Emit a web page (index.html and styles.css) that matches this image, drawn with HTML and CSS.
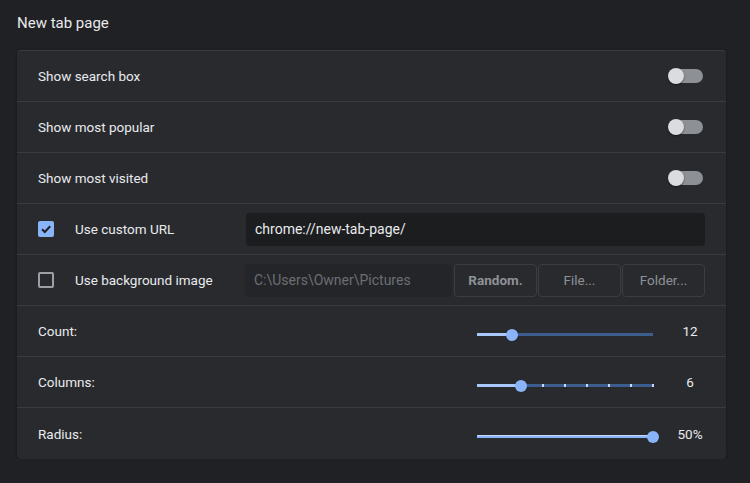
FILE: index.html
```html
<!DOCTYPE html>
<html>
<head>
<meta charset="utf-8">
<link rel="stylesheet" href="styles.css">
</head>
<body>
<div class="page">
  <h1 class="title">New tab page</h1>
  <div class="card">
    <div class="row">
      <span class="label">Show search box</span>
      <span class="toggle"><span class="knob"></span></span>
    </div>
    <div class="row">
      <span class="label">Show most popular</span>
      <span class="toggle"><span class="knob"></span></span>
    </div>
    <div class="row">
      <span class="label">Show most visited</span>
      <span class="toggle"><span class="knob"></span></span>
    </div>
    <div class="row row-input">
      <span class="checkbox checked">
        <svg width="12" height="12" viewBox="0 0 12 12"><path d="M2 6.2 L4.8 9 L10.2 3.2" fill="none" stroke="#202124" stroke-width="2"/></svg>
      </span>
      <span class="label">Use custom URL</span>
      <div class="text-field">chrome://new-tab-page/</div>
    </div>
    <div class="row row-input">
      <span class="checkbox"></span>
      <span class="label">Use background image</span>
      <div class="bg-controls">
        <div class="text-field disabled">C:\Users\Owner\Pictures</div>
        <button class="btn bold">Random.</button>
        <button class="btn">File...</button>
        <button class="btn">Folder...</button>
      </div>
    </div>
    <div class="row">
      <span class="label">Count:</span>
      <div class="slider-wrap">
        <div class="slider">
          <div class="fill" style="width: 20%"></div>
          <div class="thumb" style="left: 20%"></div>
        </div>
        <span class="value">12</span>
      </div>
    </div>
    <div class="row">
      <span class="label">Columns:</span>
      <div class="slider-wrap">
        <div class="slider ticks">
          <div class="fill" style="width: 25%"></div>
          <i class="tick" style="left: 37.5%"></i>
          <i class="tick" style="left: 50%"></i>
          <i class="tick" style="left: 62.5%"></i>
          <i class="tick" style="left: 75%"></i>
          <i class="tick" style="left: 87.5%"></i>
          <i class="tick" style="left: 100%"></i>
          <div class="thumb" style="left: 25%"></div>
        </div>
        <span class="value">6</span>
      </div>
    </div>
    <div class="row last">
      <span class="label">Radius:</span>
      <div class="slider-wrap">
        <div class="slider">
          <div class="fill full" style="width: 100%"></div>
          <div class="thumb" style="left: 100%"></div>
        </div>
        <span class="value">50%</span>
      </div>
    </div>
  </div>
</div>
</body>
</html>
```
FILE: styles.css
```css
* { box-sizing: border-box; }
html, body {
  margin: 0;
  padding: 0;
  background: #202124;
  font-family: Roboto, "Liberation Sans", sans-serif;
  color: #e8eaed;
}
.page {
  padding: 13px 24px 0 17px;
}
.title {
  margin: 0 0 17px 0;
  font-size: 15px;
  font-weight: 400;
  line-height: 20px;
  color: #e8eaed;
}
.card {
  width: 709px;
  background: #292a2d;
  border-top: 1px solid #3a3b3e;
  border-radius: 4px;
  box-shadow: 0 1px 3px rgba(0,0,0,0.35);
}
.row {
  height: 51px;
  display: flex;
  align-items: center;
  justify-content: space-between;
  padding: 0 23px 0 21px;
  border-bottom: 1px solid #3a3b3e;
  font-size: 13.5px;
}
.row.last { border-bottom: none; height: 51px; }
.label { color: #e8eaed; }
.toggle {
  position: relative;
  width: 34px;
  height: 14px;
  border-radius: 7px;
  background: #8d9196;
}
.knob {
  position: absolute;
  left: -1px;
  top: -1px;
  width: 16px;
  height: 16px;
  border-radius: 50%;
  background: #dadce0;
  box-shadow: 0 1px 2px rgba(0,0,0,0.5);
}
.row-input {
  justify-content: flex-start;
  padding-right: 21px;
}
.checkbox {
  width: 16px;
  height: 16px;
  border: 2px solid #9aa0a6;
  border-radius: 2px;
  margin-right: 21px;
  display: flex;
  align-items: center;
  justify-content: center;
}
.checkbox.checked {
  background: #8ab4f8;
  border-color: #8ab4f8;
}
.row-input .label { width: 171px; }
.text-field {
  flex: 1;
  height: 33px;
  background: #1c1d1f;
  border-radius: 4px;
  display: flex;
  align-items: center;
  padding-left: 9px;
  font-size: 14px;
  color: #e8eaed;
}
.bg-controls {
  flex: 1;
  display: flex;
  gap: 1px;
}
.text-field.disabled {
  flex: 0 0 207px;
  background: #242528;
  color: #6b6e73;
}
.btn {
  width: 83px;
  height: 33px;
  background: #292a2d;
  border: 1px solid #3c3d41;
  border-radius: 4px;
  color: #8e9297;
  font-family: Roboto, "Liberation Sans", sans-serif;
  font-size: 13.5px;
  padding: 0;
}
.btn.bold { font-weight: 700; margin-left: 1px; }
.slider-wrap {
  display: flex;
  align-items: center;
  margin-right: -2px;
}
.slider {
  position: relative;
  width: 176px;
  height: 3px;
  background: #3e5d8f;
  margin-top: 6px;
  margin-right: 22px;
}
.fill {
  position: absolute;
  left: 0;
  top: 0;
  height: 3px;
  background: #a8c7fa;
}
.fill.full {
  background: #8ab4f8;
  box-shadow: inset 0 1px 0 #c2d7fb;
}
.thumb {
  position: absolute;
  top: -4px;
  width: 12px;
  height: 12px;
  margin-left: -6px;
  border-radius: 50%;
  background: #8ab4f8;
}
.tick {
  position: absolute;
  top: 0;
  width: 2px;
  height: 3px;
  margin-left: -1px;
  background: #c8d9f7;
}
.value {
  width: 30px;
  text-align: center;
  font-size: 13.5px;
  white-space: nowrap;
}
```
